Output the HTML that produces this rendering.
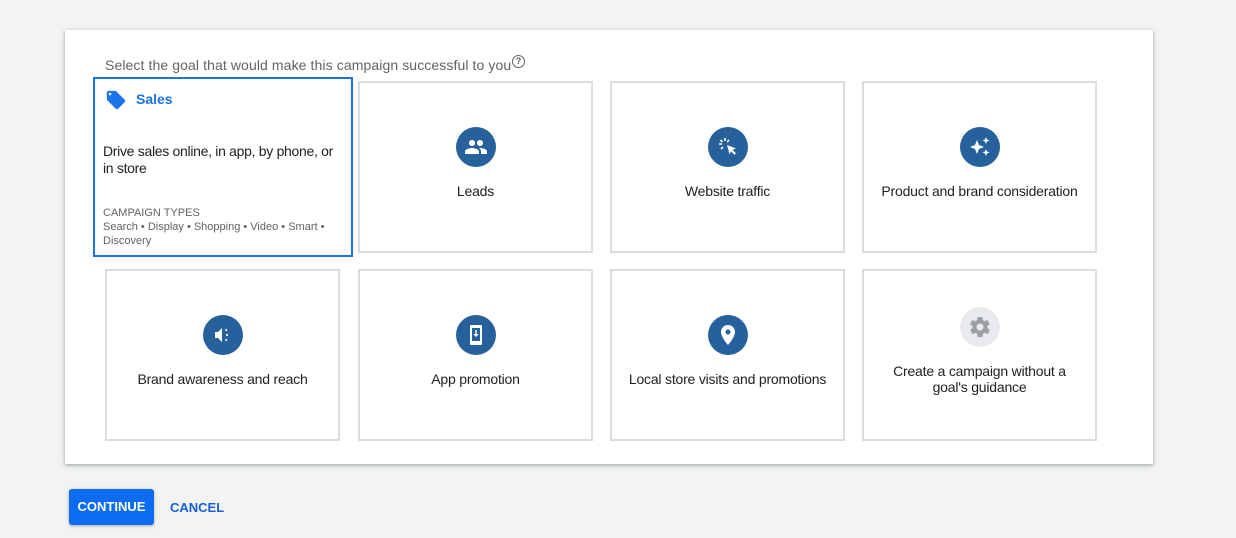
<!DOCTYPE html>
<html><head><style>
*{box-sizing:border-box;margin:0;padding:0}
body{width:1236px;height:538px;background:#f1f3f4;font-family:"Liberation Sans",Arial,sans-serif;position:relative;overflow:hidden}
.panel{position:absolute;left:65px;top:30px;width:1088px;height:434px;background:#fff;box-shadow:0 1px 3px rgba(60,64,67,.35),0 2px 6px rgba(60,64,67,.15)}
.title{position:absolute;left:105px;top:57px;font-size:14px;color:#5f6368;letter-spacing:.1px}
.q{position:absolute;left:512px;top:55px;width:13px;height:13px;border:1.3px solid #5f6368;border-radius:50%;font-size:9px;text-align:center;line-height:11px;color:#5f6368;font-weight:bold}
.card{position:absolute;width:235px;height:172px;border:2px solid #dadce0;background:#fff;text-align:center;font-size:14px;color:#202124;letter-spacing:-.2px}
.ic{position:absolute;left:50%;margin-left:-20px;top:44px;width:40px;height:40px;border-radius:50%;background:#26619c}
.ic svg{position:absolute;left:8px;top:8px}
.lbl{position:absolute;left:0;right:0;top:100px}
.sel{position:absolute;left:93px;top:77px;width:260px;height:180px;border:2px solid #1a73e8;background:#fff;color:#202124}
.btn{position:absolute;left:69px;top:489px;width:85px;height:36px;background:#0b6cf0;border-radius:3px;color:#fff;font-weight:bold;font-size:13px;text-align:center;line-height:36px;box-shadow:0 1px 3px rgba(0,0,0,.3)}
.cancel{position:absolute;left:170px;top:500px;color:#1a5fd6;font-weight:bold;font-size:13px}
</style></head><body>
<div class="panel"></div>
<div class="title">Select the goal that would make this campaign successful to you</div>
<div class="q">?</div>
<div class="sel">
<svg style="position:absolute;left:10px;top:10px" width="22" height="22" viewBox="0 0 24 24"><path fill="#1a73e8" d="M21.4 11.6l-9-9C12.1 2.2 11.6 2 11 2H4c-1.1 0-2 .9-2 2v7c0 .6.2 1.1.6 1.4l9 9c.4.4.9.6 1.4.6s1.1-.2 1.4-.6l7-7c.4-.4.6-.9.6-1.4s-.2-1.1-.6-1.4zM5.5 7C4.7 7 4 6.3 4 5.5S4.7 4 5.5 4 7 4.7 7 5.5 6.3 7 5.5 7z"/></svg>
<div style="position:absolute;left:41px;top:12px;color:#1a73e8;font-weight:bold;font-size:14px">Sales</div>
<div style="position:absolute;left:8px;top:64px;font-size:14px;line-height:17px;width:240px;letter-spacing:-.3px">Drive sales online, in app, by phone, or in store</div>
<div style="position:absolute;left:8px;top:127px;font-size:11px;line-height:14px;color:#5f6368;width:245px">CAMPAIGN TYPES<br>Search • Display • Shopping • Video • Smart • Discovery</div>
</div>
<div class="card" style="left:358px;top:81px"><div class="ic"><svg width="24" height="24" viewBox="0 0 24 24"><path fill="#fff" d="M16 11c1.7 0 3-1.3 3-3s-1.3-3-3-3-3 1.3-3 3 1.3 3 3 3zm-8 0c1.7 0 3-1.3 3-3S9.7 5 8 5 5 6.3 5 8s1.3 3 3 3zm0 2c-2.3 0-7 1.2-7 3.5V19h14v-2.5C15 14.2 10.3 13 8 13zm8 0c-.3 0-.6 0-1 .1 1.2.8 2 1.9 2 3.4V19h6v-2.5c0-2.3-4.7-3.5-7-3.5z"/></svg></div><div class="lbl">Leads</div></div>
<div class="card" style="left:610px;top:81px"><div class="ic"><svg width="24" height="24" viewBox="0 0 24 24"><path fill="#fff" d="M11 10l9 3.5-3.5 1.2 3.5 3.5-1.6 1.6-3.5-3.5L13.7 19.5z"/><path stroke="#fff" stroke-width="1.6" d="M9 3v3M4.5 5l2 2M3 9h3M5 14l2-2M13 5l-2 2"/></svg></div><div class="lbl">Website traffic</div></div>
<div class="card" style="left:862px;top:81px"><div class="ic"><svg width="24" height="24" viewBox="0 0 24 24"><path fill="#fff" d="M9 5l2 5 5 2-5 2-2 5-2-5-5-2 5-2zM18 2l1 2.5 2.5 1-2.5 1-1 2.5-1-2.5-2.5-1 2.5-1zM18 14l1 2.5 2.5 1-2.5 1-1 2.5-1-2.5-2.5-1 2.5-1z"/></svg></div><div class="lbl">Product and brand consideration</div></div>
<div class="card" style="left:105px;top:269px"><div class="ic"><svg width="24" height="24" viewBox="0 0 24 24"><path fill="#fff" d="M4 9h3l4-4v14l-4-4H4z"/><path stroke="#fff" stroke-width="1.8" d="M15 12h2M14.5 7.5l1.5-1M14.5 16.5l1.5 1"/></svg></div><div class="lbl">Brand awareness and reach</div></div>
<div class="card" style="left:358px;top:269px"><div class="ic"><svg width="24" height="24" viewBox="0 0 24 24"><path fill="#fff" d="M7 2h10c.6 0 1 .4 1 1v18c0 .6-.4 1-1 1H7c-.6 0-1-.4-1-1V3c0-.6.4-1 1-1zm1 3v13h8V5zm2 14.5h4v1h-4z"/><path fill="#fff" d="M11.3 7h1.4v4h2L12 14l-2.7-3h2z"/></svg></div><div class="lbl">App promotion</div></div>
<div class="card" style="left:610px;top:269px"><div class="ic"><svg width="24" height="24" viewBox="0 0 24 24"><path fill="#fff" d="M12 2C8.1 2 5 5.1 5 9c0 5.2 7 13 7 13s7-7.8 7-13c0-3.9-3.1-7-7-7zm0 9.5c-1.4 0-2.5-1.1-2.5-2.5S10.6 6.5 12 6.5s2.5 1.1 2.5 2.5-1.1 2.5-2.5 2.5z"/></svg></div><div class="lbl">Local store visits and promotions</div></div>
<div class="card" style="left:862px;top:269px"><div class="ic" style="background:#e8eaed;top:36px"><svg width="24" height="24" viewBox="0 0 24 24"><path fill="#9aa0a6" d="M19.4 13c0-.3.1-.6.1-1s0-.7-.1-1l2.1-1.6c.2-.2.2-.4.1-.6l-2-3.5c-.1-.2-.4-.3-.6-.2l-2.5 1c-.5-.4-1.100-.7-1.700-1l-.4-2.600c0-.2-.2-.4-.5-.4h-4c-.2 0-.5.2-.5.4l-.4 2.700c-.6.2-1.100.6-1.700 1l-2.500-1c-.2-.1-.5 0-.6.2l-2 3.500c-.1.2-.1.5.1.6L4.6 11c0 .3-.1.6-.1 1s0 .7.1 1l-2.100 1.600c-.2.2-.2.4-.1.6l2 3.500c.1.2.4.3.6.2l2.500-1c.5.4 1.100.7 1.700 1l.4 2.700c0 .2.2.4.5.4h4c.2 0 .5-.2.5-.4l.4-2.700c.6-.3 1.200-.6 1.700-1l2.500 1c.2.1.5 0 .6-.2l2-3.500c.1-.2.1-.5-.1-.6zM12 15.5c-1.900 0-3.500-1.600-3.500-3.500s1.600-3.500 3.500-3.500 3.500 1.600 3.500 3.500-1.600 3.500-3.500 3.500z"/></svg></div><div class="lbl" style="top:92px;line-height:16px;padding:0 14px">Create a campaign without a goal's guidance</div></div>
<div class="btn">CONTINUE</div>
<div class="cancel">CANCEL</div>
</body></html>
